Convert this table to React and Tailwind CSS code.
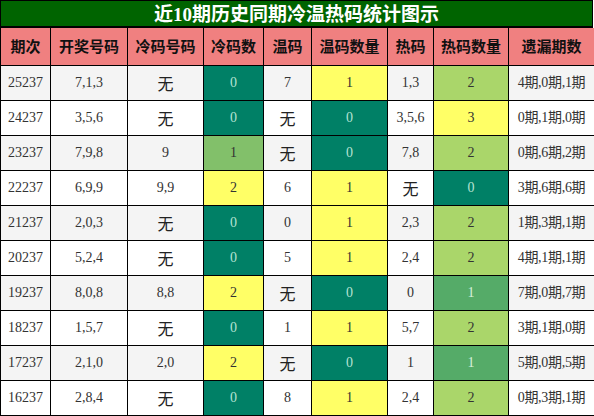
import React from "react";

// ── Data ───────────────────────────────────────────────────────────────────────
const rows = [
  ["25237", "7,1,3", "无", 0, "7", 1, "1,3", 2, "4期,0期,1期"],
  ["24237", "3,5,6", "无", 0, "无", 0, "3,5,6", 3, "0期,1期,0期"],
  ["23237", "7,9,8", "9", 1, "无", 0, "7,8", 2, "0期,6期,2期"],
  ["22237", "6,9,9", "9,9", 2, "6", 1, "无", 0, "3期,6期,6期"],
  ["21237", "2,0,3", "无", 0, "0", 1, "2,3", 2, "1期,3期,1期"],
  ["20237", "5,2,4", "无", 0, "5", 1, "2,4", 2, "4期,1期,1期"],
  ["19237", "8,0,8", "8,8", 2, "无", 0, "0", 1, "7期,0期,7期"],
  ["18237", "1,5,7", "无", 0, "1", 1, "5,7", 2, "3期,1期,0期"],
  ["17237", "2,1,0", "2,0", 2, "无", 0, "1", 1, "5期,0期,5期"],
  ["16237", "2,8,4", "无", 0, "8", 1, "2,4", 2, "0期,3期,1期"],
];

const headers = ["期次", "开奖号码", "冷码号码", "冷码数", "温码", "温码数量", "热码", "热码数量", "遗漏期数"];
const widths = ["w-[50px]", "w-[77px]", "w-[76px]", "w-[60px]", "w-[48px]", "w-[76px]", "w-[46px]", "w-[75px]", "w-[86px]"];

const TEAL = "bg-[#008066] text-[#b5e3d3]";
const YELLOW = "bg-[#ffff66] text-[#333]";

const coldCls = { 0: TEAL, 1: "bg-[#82c06a] text-[#333]", 2: YELLOW };
const warmCls = { 0: TEAL, 1: YELLOW };
const hotCls = { 0: TEAL, 1: "bg-[#55ab68] text-[#d5f0dc]", 2: "bg-[#aad66a] text-[#333]", 3: YELLOW };

const serif = "font-['Liberation_Serif','Noto_Sans_CJK_SC',serif]";

function Cell({ value, cls = "" }) {
  const none = value === "无";
  return (
    <td className={`border border-black text-center align-middle text-[14px] ${none ? "text-[16px] font-['Noto_Sans_CJK_SC',sans-serif] text-[#222]" : ""} ${cls}`}>
      {value}
    </td>
  );
}

// ── Component ──────────────────────────────────────────────────────────────────
export default function App() {
  return (
    <div className={`w-[594px] h-[416px] bg-white text-[#333] ${serif}`}>
      <div className="h-[28px] w-[593px] border-t border-l border-r border-b-2 border-black bg-[#006400] flex items-center justify-center">
        <span className="text-white font-bold text-[19px] leading-none font-['Noto_Sans_CJK_SC',sans-serif]">
          近<span className="font-['Liberation_Serif',serif]">10</span>期历史同期冷温热码统计图示
        </span>
      </div>
      <table className="table-fixed border-collapse w-[593px]">
        <colgroup>
          {widths.map((w, i) => <col key={i} className={w} />)}
        </colgroup>
        <thead>
          <tr className="h-[37px] bg-[#f08080]">
            {headers.map((h) => (
              <th key={h} className="border border-t-0 border-black text-center font-bold text-[15px] text-[#111] font-['Noto_Sans_CJK_SC',sans-serif]">
                {h}
              </th>
            ))}
          </tr>
        </thead>
        <tbody>
          {rows.map((r, i) => (
            <tr key={r[0]} className={`h-[35px] ${i % 2 === 0 ? "bg-[#f4f4f4]" : "bg-white"}`}>
              <Cell value={r[0]} />
              <Cell value={r[1]} />
              <Cell value={r[2]} />
              <Cell value={r[3]} cls={coldCls[r[3]]} />
              <Cell value={r[4]} />
              <Cell value={r[5]} cls={warmCls[r[5]]} />
              <Cell value={r[6]} />
              <Cell value={r[7]} cls={hotCls[r[7]]} />
              <td className="border border-black text-center align-middle text-[14px] whitespace-nowrap tracking-[-0.3px]">
                {r[8]}
              </td>
            </tr>
          ))}
        </tbody>
      </table>
    </div>
  );
}
